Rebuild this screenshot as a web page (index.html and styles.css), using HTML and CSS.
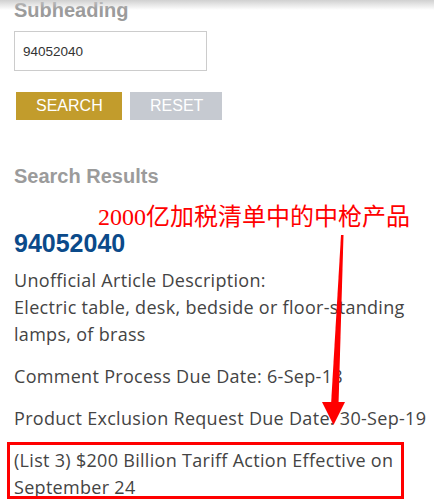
FILE: index.html
```html
<!DOCTYPE html>
<html lang="en">
<head>
<meta charset="utf-8">
<title>Search</title>
<link rel="stylesheet" href="styles.css">
</head>
<body>
<div class="topshade"></div>
<main class="page">
  <h2 class="subhead">Subheading</h2>
  <div class="search-field"><input class="search-input" type="text" value="94052040"></div>
  <div class="actions">
    <button class="btn btn-search">SEARCH</button>
    <button class="btn btn-reset">RESET</button>
  </div>
  <h2 class="results-title">Search Results</h2>
  <p class="note">2000亿加税清单中的中枪产品</p>
  <h3 class="code">94052040</h3>
  <p class="para first">Unofficial Article Description:<br>Electric table, desk, bedside or floor-standing lamps, of brass</p>
  <p class="para">Comment Process Due Date: 6-Sep-18</p>
  <p class="para">Product Exclusion Request Due Date: 30-Sep-19</p>
  <p class="para boxed">(List 3) $200 Billion Tariff Action Effective on September 24</p>
</main>
<svg class="arrow" width="434" height="504" viewBox="0 0 434 504">
  <polygon points="341,235 343.5,235 338.5,405 331,405" fill="#ff0000"/>
  <polygon points="322,402 345,402 333.5,425" fill="#ff0000"/>
</svg>
</body>
</html>
```
FILE: styles.css
```css
html, body {
  margin: 0;
  padding: 0;
  background: #ffffff;
}
body {
  width: 434px;
  height: 504px;
  overflow: hidden;
  position: relative;
}
.topshade {
  position: absolute;
  left: 0;
  top: 0;
  width: 434px;
  height: 10px;
  background: linear-gradient(to bottom, rgba(200,200,200,0.85), rgba(255,255,255,0));
  z-index: 5;
}
.page {
  padding: 0 0 0 14px;
}
.subhead,
.results-title {
  font-family: "Liberation Sans", Arial, sans-serif;
  font-weight: bold;
  font-size: 20px;
  line-height: 20px;
  color: #9b9b9b;
  margin: 0;
}
.search-field {
  margin-top: 11px;
}
.search-input {
  box-sizing: border-box;
  width: 193px;
  height: 40px;
  border: 1px solid #cccccc;
  padding: 0 0 0 8px;
  font-family: "Liberation Sans", Arial, sans-serif;
  font-size: 13.5px;
  color: #333333;
  outline: none;
  margin: 0;
}
.actions {
  display: flex;
  gap: 8px;
  margin-top: 21px;
  padding-left: 2px;
}
.btn {
  height: 28px;
  border: none;
  padding: 0 20px;
  font-family: "Liberation Sans", Arial, sans-serif;
  font-size: 16px;
  color: #ffffff;
  margin: 0;
}
.btn-search {
  background: #c29c2c;
  width: 106px;
}
.btn-reset {
  background: #c6cad1;
  width: 92px;
}
.results-title {
  margin-top: 46px;
}
.note {
  margin: 18px 0 0 84px;
  font-family: "Liberation Serif", "Noto Sans CJK SC", serif;
  font-size: 24px;
  line-height: 26px;
  color: #ff0000;
  white-space: nowrap;
}
.code {
  margin: -1px 0 0;
  font-family: "Liberation Sans", Arial, sans-serif;
  font-weight: bold;
  font-size: 25px;
  line-height: 28px;
  color: #0b4a8a;
}
.para {
  margin: 15px 0 0;
  font-family: "Open Sans", sans-serif;
  font-size: 18px;
  letter-spacing: 0.3px;
  line-height: 27px;
  color: #444444;
}
.para.first {
  margin-top: 10px;
}
.boxed {
  position: relative;
}
.boxed::after {
  content: "";
  position: absolute;
  left: -7px;
  top: -5px;
  width: 391px;
  height: 51px;
  border: 3px solid #ff0000;
}
.arrow {
  position: absolute;
  left: 0;
  top: 0;
  pointer-events: none;
}
```
